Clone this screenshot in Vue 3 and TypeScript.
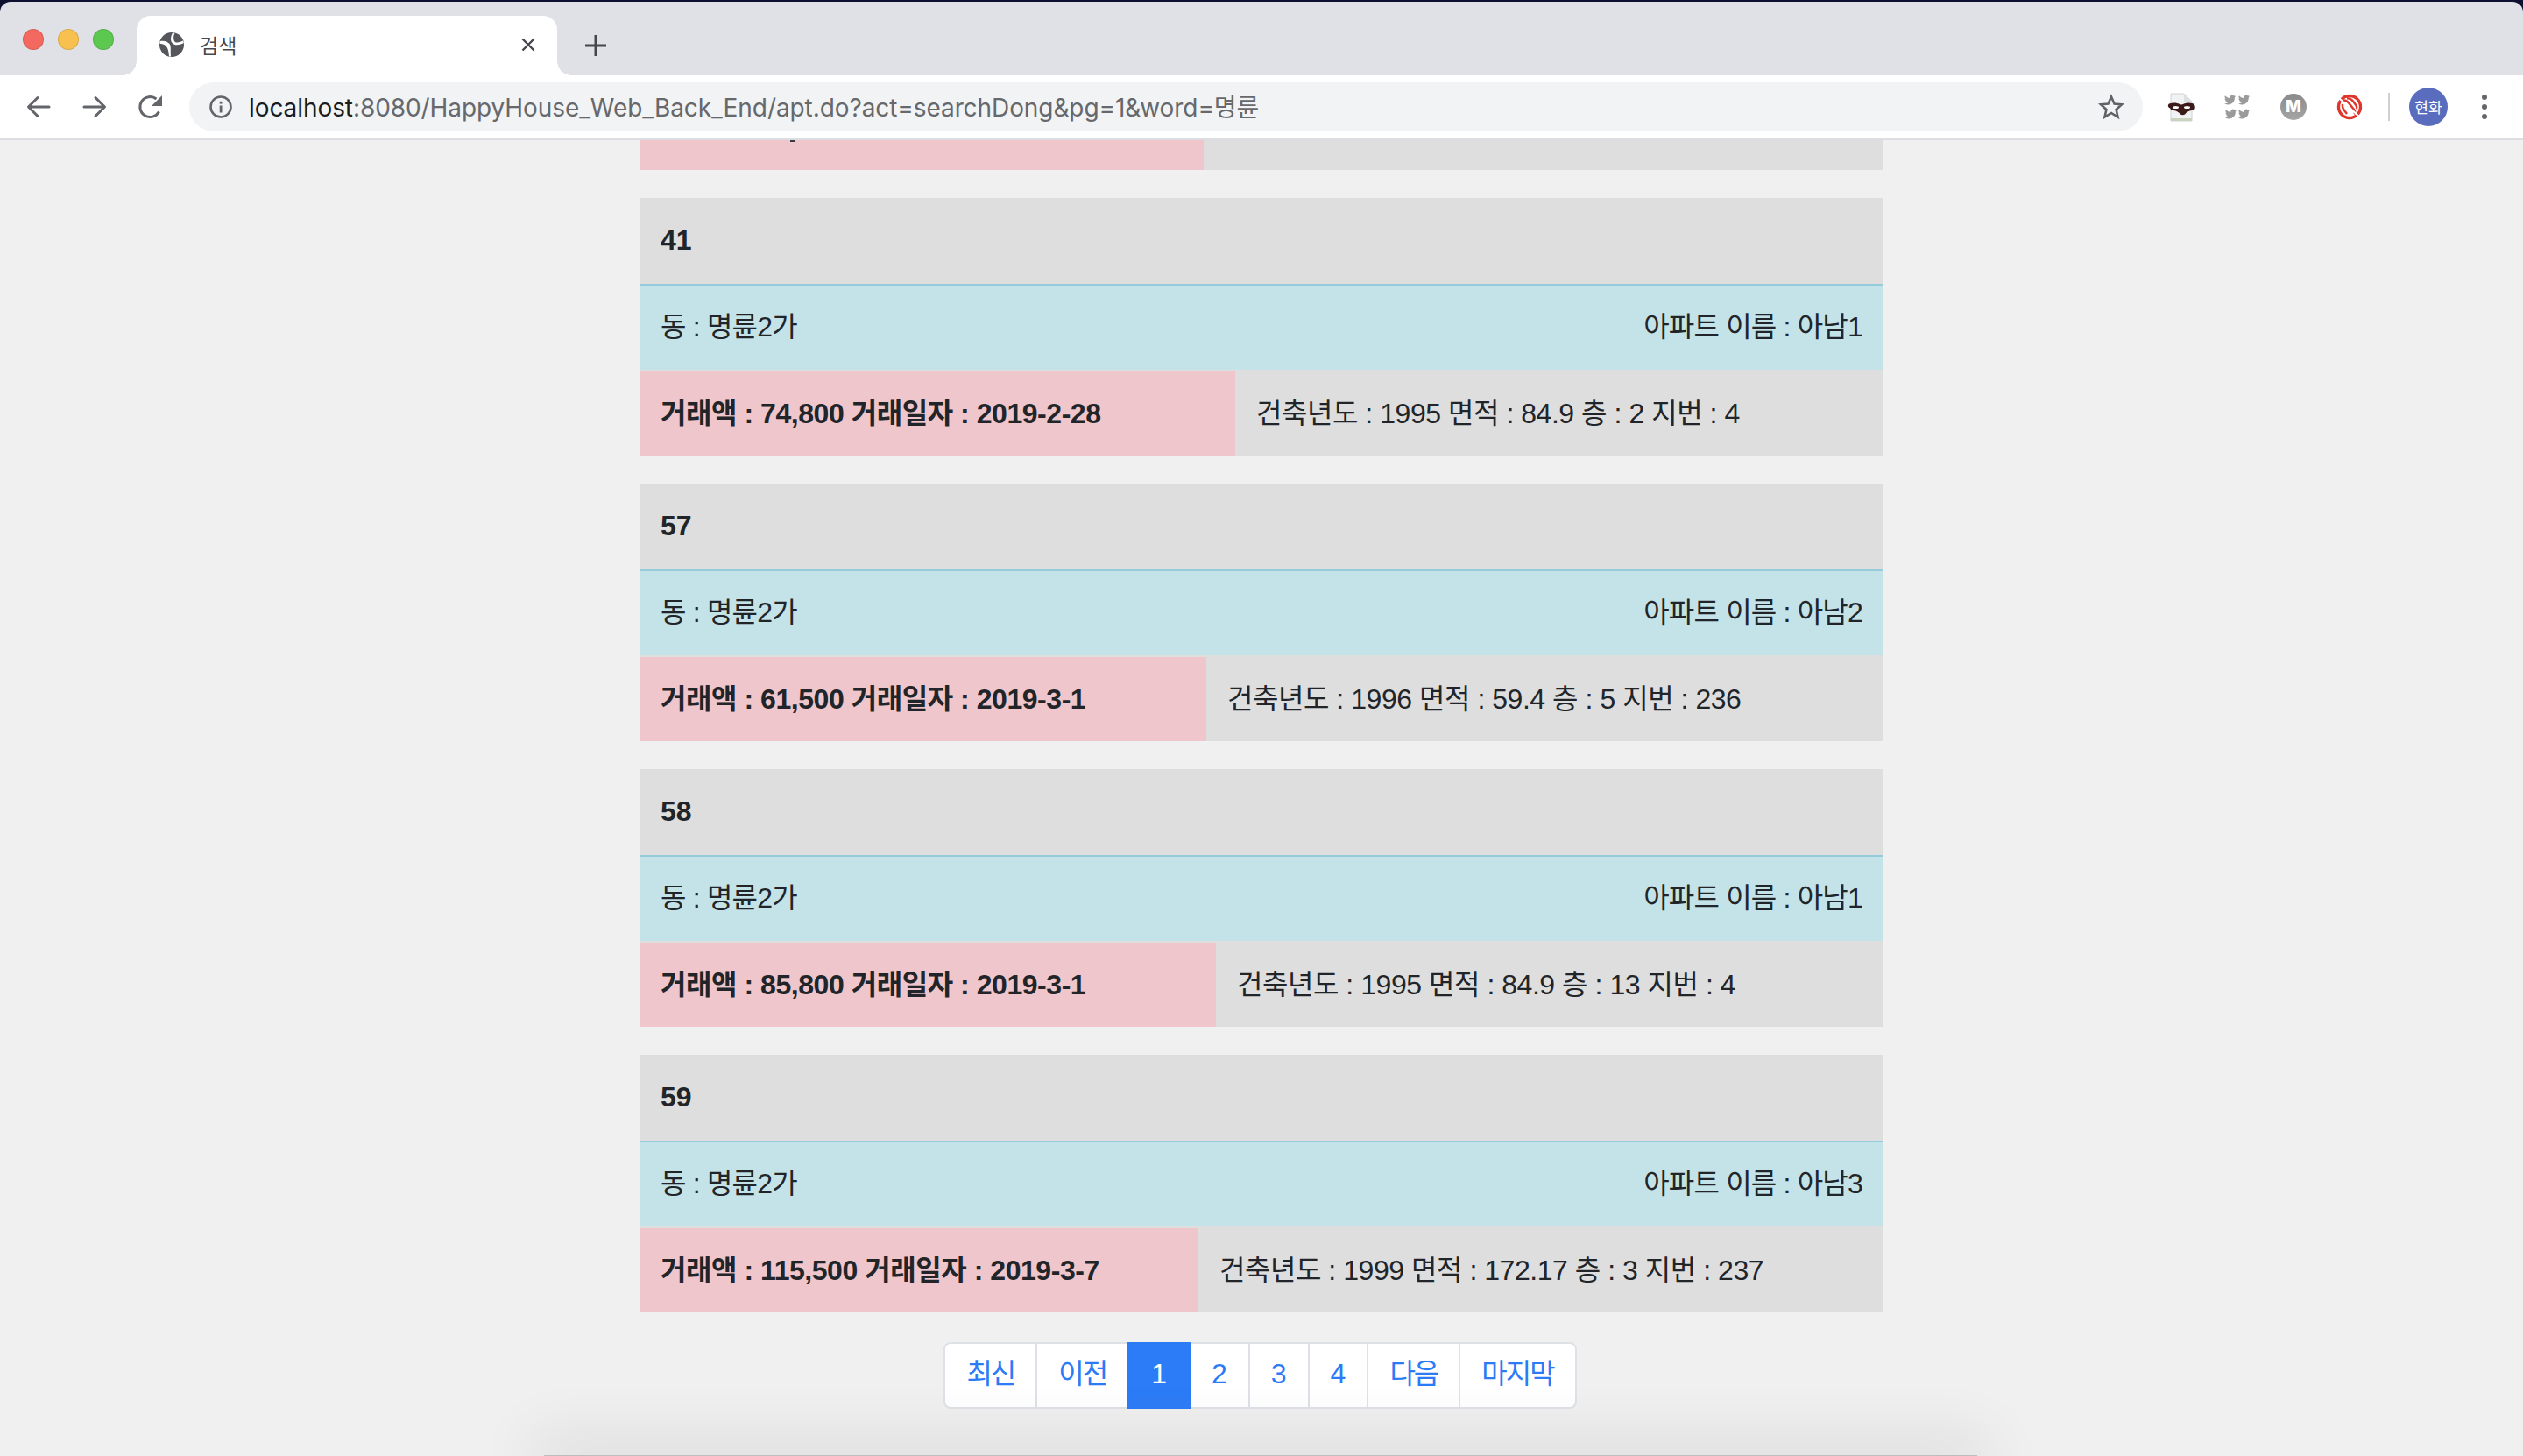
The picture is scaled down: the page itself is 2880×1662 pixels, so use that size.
<script setup lang="ts">
interface Apt {
  id: number;
  dong: string;
  name: string;
  deal: string;
  info: string;
  dealWidth: number;
}

const apts: Apt[] = [
  { id: 41, dong: '명륜2가', name: '아남1', deal: '거래액 : 74,800 거래일자 : 2019-2-28', info: '건축년도 : 1995 면적 : 84.9 층 : 2 지번 : 4', dealWidth: 680 },
  { id: 57, dong: '명륜2가', name: '아남2', deal: '거래액 : 61,500 거래일자 : 2019-3-1', info: '건축년도 : 1996 면적 : 59.4 층 : 5 지번 : 236', dealWidth: 647 },
  { id: 58, dong: '명륜2가', name: '아남1', deal: '거래액 : 85,800 거래일자 : 2019-3-1', info: '건축년도 : 1995 면적 : 84.9 층 : 13 지번 : 4', dealWidth: 658 },
  { id: 59, dong: '명륜2가', name: '아남3', deal: '거래액 : 115,500 거래일자 : 2019-3-7', info: '건축년도 : 1999 면적 : 172.17 층 : 3 지번 : 237', dealWidth: 638 },
];

const pages = [
  { label: '최신', active: false, hangul: true },
  { label: '이전', active: false, hangul: true },
  { label: '1', active: true, hangul: false },
  { label: '2', active: false, hangul: false },
  { label: '3', active: false, hangul: false },
  { label: '4', active: false, hangul: false },
  { label: '다음', active: false, hangul: true },
  { label: '마지막', active: false, hangul: true },
];

const birdPath = 'M16 3.5c-.6.3-1.2.4-1.9.5.7-.4 1.2-1 1.4-1.8-.6.4-1.3.6-2.1.8a3.3 3.3 0 0 0-5.6 3C5.1 5.900 2.700 4.600 1.100 2.600c-.9 1.500-.4 3.400 1 4.400-.5 0-1-.2-1.500-.4 0 1.600 1.100 3 2.600 3.300-.5.1-1 .2-1.500.1.400 1.300 1.600 2.200 3.100 2.300A6.600 6.600 0 0 1 0 13.600 9.300 9.300 0 0 0 14.400 5.300c.6-.5 1.200-1.100 1.600-1.800z';
</script>

<template>
  <div class="window">
    <header class="chrome">
      <div class="tabbar">
        <div class="lights">
          <span class="light red"></span>
          <span class="light yellow"></span>
          <span class="light green"></span>
        </div>
        <div class="tab">
          <svg class="globe" width="28" height="28" viewBox="0 0 28 28">
            <circle cx="14" cy="14" r="14" fill="#54565c" />
            <path d="M.5 10C5 9 9 10 11.500 13c2 2.500 1 7 1.500 14.500h-2C10.500 22 10 18 7.500 15.500 5.500 13.500 2.500 13 .5 13z" fill="#fff" />
            <path d="M17.500.8C16 4 15.500 7 17 10c1.500 2.500 6 1.500 10-.5l.7 2.500c-4.700 2.500-10.200 3.500-13.200 0-2.500-3-1.500-8 .5-11.500z" fill="#fff" />
          </svg>
          <span class="tab-title">검색</span>
          <svg class="tab-close" width="18" height="18" viewBox="0 0 18 18">
            <path d="M2.500 2.500l13 13M15.500 2.500l-13 13" stroke="#44464b" stroke-width="2.400" fill="none" />
          </svg>
        </div>
        <svg class="newtab" width="26" height="26" viewBox="0 0 26 26">
          <path d="M13 1v24M1 13h24" stroke="#44464b" stroke-width="3" fill="none" />
        </svg>
      </div>
      <div class="toolbar">
        <div class="nav-icon">
          <svg width="30" height="30" viewBox="0 0 30 30">
            <path d="M27 15H4M14 4.500L3.500 15 14 25.500" stroke="#63656a" stroke-width="3" fill="none" stroke-linecap="round" stroke-linejoin="round" />
          </svg>
        </div>
        <div class="nav-icon">
          <svg width="30" height="30" viewBox="0 0 30 30">
            <path d="M3 15h23M16 4.500L26.500 15 16 25.500" stroke="#63656a" stroke-width="3" fill="none" stroke-linecap="round" stroke-linejoin="round" />
          </svg>
        </div>
        <div class="nav-icon">
          <svg width="30" height="30" viewBox="0 0 30 30">
            <path d="M24.500 20.500A11.500 11.500 0 1 1 21.500 6" stroke="#63656a" stroke-width="3" fill="none" />
            <path d="M28 2v12H16z" fill="#63656a" />
          </svg>
        </div>
        <div class="omnibox">
          <svg class="info" width="26" height="26" viewBox="0 0 26 26">
            <circle cx="13" cy="13" r="11.500" fill="none" stroke="#63656a" stroke-width="2.600" />
            <rect x="11.700" y="11.500" width="2.800" height="8" fill="#63656a" />
            <rect x="11.700" y="6.800" width="2.800" height="2.800" fill="#63656a" />
          </svg>
          <span class="url"><span class="host">localhost</span>:8080/HappyHouse_Web_Back_End/apt.do?act=searchDong&amp;pg=1&amp;word=명륜</span>
          <svg class="star" width="30" height="30" viewBox="0 0 30 30">
            <path d="M15 3.500l3.500 8 8.500.8-6.400 5.700 1.900 8.500-7.500-4.500-7.500 4.500 1.900-8.500L3 12.300l8.500-.8z" fill="none" stroke="#5f6166" stroke-width="2.600" stroke-linejoin="miter" />
          </svg>
        </div>
        <div class="ext">
          <svg width="34" height="34" viewBox="0 0 34 34">
            <path d="M5 2h15l9 9v22H5z" fill="#f1f2f3" stroke="#cfd1d3" stroke-width="1" />
            <path d="M20 2v9h9" fill="#dfe0e2" />
            <rect x="5" y="30" width="24" height="3" fill="#c9d3bd" />
            <path d="M3 13.500c5-1.500 9-1 12 .5 1.300.5 2.700.5 4 0 3-1.500 7-2 12-.5 1.500 1 2 3.500 1.700 5-.3 1.500-1.700 2.500-3.700 2.500-3.500.5-6 2-8 4.500-1.300 1-3.700 1-5 0-2-2.500-4.500-4-8-4.500-2 0-3.400-1-3.700-2.500C1 17 1.500 14.500 3 13.500z" fill="#3c1a18" />
            <ellipse cx="10.500" cy="17.500" rx="3.500" ry="1.500" fill="#fff" />
            <ellipse cx="23.500" cy="17.500" rx="3.500" ry="1.500" fill="#fff" />
          </svg>
        </div>
        <div class="ext">
          <svg width="30" height="30" viewBox="0 0 32 32" fill="#9a9a9a">
            <path :d="birdPath" transform="translate(0 0) scale(.88)" />
            <path :d="birdPath" transform="translate(17 0) scale(.88)" />
            <path :d="birdPath" transform="translate(1 17) scale(.88)" />
            <path :d="birdPath" transform="translate(17 17) scale(.88)" />
          </svg>
        </div>
        <div class="ext">
          <span class="mega">M</span>
        </div>
        <div class="ext">
          <svg width="30" height="30" viewBox="0 0 30 30">
            <circle cx="15" cy="15" r="12.500" fill="none" stroke="#e0352b" stroke-width="3.400" />
            <path d="M5.500 8.500C9 6.500 12 8 14 10.500l6 7.500c1.500 2 1.500 4 0 5" fill="none" stroke="#e0352b" stroke-width="2.600" />
            <path d="M12 5.500c2.500-.5 5 .5 7 3l3.500 5c1 1.500 1 3 .5 4" fill="none" stroke="#e0352b" stroke-width="2.400" />
            <path d="M7 12c-.5 2.500 0 4.500 2 7l3 4" fill="none" stroke="#e0352b" stroke-width="2.400" />
            <path d="M3.500 5.500l23 21" stroke="#fff" stroke-width="2.200" />
          </svg>
        </div>
        <span class="divider"></span>
        <span class="avatar">현화</span>
        <div class="kebab">
          <span class="dot"></span>
          <span class="dot"></span>
          <span class="dot"></span>
        </div>
      </div>
    </header>

    <main class="page">
      <div class="list">
        <div class="row partial">
          <div class="deal-end" style="width: 644px"><span class="comma-tail"></span></div>
          <div class="info-end"></div>
        </div>
        <article v-for="apt in apts" :key="apt.id" class="apt">
          <div class="apt-id">{{ apt.id }}</div>
          <div class="apt-place">
            <span>동 : {{ apt.dong }}</span>
            <span>아파트 이름 : {{ apt.name }}</span>
          </div>
          <div class="row">
            <div class="deal" :style="{ width: apt.dealWidth + 'px' }">{{ apt.deal }}</div>
            <div class="info-cell">{{ apt.info }}</div>
          </div>
        </article>
      </div>
      <nav class="pagination">
        <a v-for="p in pages" :key="p.label" class="page-link" :class="{ active: p.active, hangul: p.hangul }">{{ p.label }}</a>
      </nav>
      <div class="dock-shadow"></div>
    </main>
  </div>
</template>

<style>
html, body { margin: 0; padding: 0; background: #0d1030; }
</style>

<style scoped>
.window {
  width: 2880px;
  height: 1662px;
  display: flex;
  flex-direction: column;
  overflow: hidden;
  font-family: "Liberation Sans", "Noto Sans CJK KR", sans-serif;
  color: #212529;
}
.chrome {
  flex: none;
  margin-top: 2px;
  border-radius: 12px 12px 0 0;
  overflow: hidden;
  background: #dfe1e6;
}
.tabbar {
  height: 84px;
  display: flex;
  align-items: flex-end;
  box-sizing: border-box;
  padding-left: 26px;
}
.lights {
  width: 130px;
  height: 68px;
  display: flex;
  gap: 16px;
  align-items: center;
  padding-bottom: 14px;
  box-sizing: border-box;
}
.light { width: 24px; height: 24px; border-radius: 50%; box-sizing: border-box; border: 1px solid rgba(0,0,0,.12); }
.red { background: #f4695f; }
.yellow { background: #f8c14f; }
.green { background: #5dc850; }
.tab {
  position: relative;
  width: 480px;
  height: 68px;
  background: #fff;
  border-radius: 16px 16px 0 0;
  display: flex;
  align-items: center;
  padding: 0 24px 0 26px;
  box-sizing: border-box;
}
.tab::before, .tab::after {
  content: "";
  position: absolute;
  bottom: 0;
  width: 16px;
  height: 16px;
  background: radial-gradient(circle at 0 0, #dfe1e6 15.500px, #fff 16px);
}
.tab::before { left: -16px; }
.tab::after { right: -16px; transform: scaleX(-1); }
.globe { flex: none; margin-top: -2px; }
.tab-title {
  margin-left: 18px;
  flex: 1;
  font-size: 23px;
  color: #46484d;
  font-family: "Noto Sans CJK KR", sans-serif;
  margin-top: -3px;
}
.tab-close { flex: none; margin-top: -2px; }
.newtab { margin: 0 0 21px 31px; flex: none; }
.toolbar {
  height: 74px;
  background: #fff;
  border-bottom: 2px solid #dcdde3;
  box-sizing: border-box;
  padding: 8px 22px;
  display: flex;
  align-items: center;
  gap: 20px;
}
.nav-icon, .ext {
  width: 44px;
  height: 44px;
  flex: none;
  display: flex;
  align-items: center;
  justify-content: center;
}
.omnibox {
  flex: 1;
  height: 56px;
  margin: 0 2px;
  padding: 0 20px 0 23px;
  background: #f1f3f4;
  border-radius: 28px;
  display: flex;
  align-items: center;
  min-width: 0;
}
.info { flex: none; }
.url {
  flex: 1;
  margin: 0 0 3px 19px;
  font-size: 28px;
  font-family: Inter, "Noto Sans CJK KR", sans-serif;
  color: #66686c;
  white-space: nowrap;
  letter-spacing: -0.08px;
}
.host { color: #1b1c1e; }
.star { flex: none; margin-right: 1px; }
.mega {
  width: 30px;
  height: 30px;
  border-radius: 50%;
  background: linear-gradient(#8a8a8a, #a5a5a5);
  color: #fff;
  font: 800 19px/30px Inter, sans-serif;
  text-align: center;
}
.divider { width: 2px; height: 32px; background: #cfd0d2; flex: none; margin: 0 2px; }
.avatar {
  width: 44px;
  height: 44px;
  flex: none;
  border-radius: 50%;
  background: #5a6cbd;
  color: #fff;
  font: 400 17px/44px "Noto Sans CJK KR", sans-serif;
  text-align: center;
}
.kebab {
  width: 44px;
  flex: none;
  display: flex;
  flex-direction: column;
  align-items: center;
  gap: 5px;
}
.dot { width: 6px; height: 6px; border-radius: 50%; background: #63656a; }

.page {
  position: relative;
  flex: 1;
  min-height: 0;
  overflow: hidden;
  background: #f0f0f0;
}
.list {
  width: 1420px;
  margin: 0 auto;
  display: flex;
  flex-direction: column;
  gap: 32px;
}
.apt {
  display: flex;
  flex-direction: column;
  background: #dedede;
}
.apt-id {
  height: 98px;
  padding: 0 24px;
  box-sizing: border-box;
  font-size: 32px;
  font-weight: 700;
  line-height: 96px;
}
.apt-place {
  height: 98px;
  margin-bottom: 2px;
  box-sizing: border-box;
  border-top: 2px solid #95cbdb;
  background: #c4e3e8;
  display: flex;
  justify-content: space-between;
  align-items: center;
  padding: 0 24px 8px;
  font-size: 32px;
  letter-spacing: -0.8px;
}
.row {
  display: flex;
  height: 96px;
  background: #dedede;
  font-size: 32px;
}
.row.partial { height: 34px; }
.deal-end { flex: none; height: 34px; background: #efc6cb; }
.info-end { flex: 1; }
.comma-tail { display: block; width: 6px; height: 2px; margin-left: 172px; background: #3a3b40; }
.deal {
  flex: none;
  box-sizing: border-box;
  height: 96px;
  padding: 0 0 6px 24px;
  display: flex;
  align-items: center;
  white-space: nowrap;
  background: #efc6cb;
  font-weight: 700;
  letter-spacing: -0.45px;
}
.info-cell {
  flex: 1;
  height: 96px;
  padding: 0 0 6px 24px;
  box-sizing: border-box;
  display: flex;
  align-items: center;
  white-space: nowrap;
  letter-spacing: -0.46px;
}
.pagination {
  margin-top: 34px;
  padding-right: 3px;
  display: flex;
  justify-content: center;
}
.page-link {
  height: 76px;
  box-sizing: border-box;
  padding: 0 24px;
  margin-left: -2px;
  background: #fff;
  border: 2px solid #dee2e6;
  color: #2c7bf6;
  font-size: 32px;
  line-height: 68px;
}
.page-link.hangul { letter-spacing: -2px; }
.page-link:first-child { border-radius: 8px 0 0 8px; margin-left: 0; }
.page-link:last-child { border-radius: 0 8px 8px 0; }
.page-link.active {
  position: relative;
  padding: 0 25px;
  background: #2d7cf7;
  border-color: #2d7cf7;
  color: #fff;
}
.dock-shadow {
  position: absolute;
  left: 621px;
  width: 1636px;
  bottom: 0;
  height: 1px;
  background: #bdbdbd;
  box-shadow: 0 0 70px 14px rgba(0, 0, 0, .14);
  pointer-events: none;
}
</style>
